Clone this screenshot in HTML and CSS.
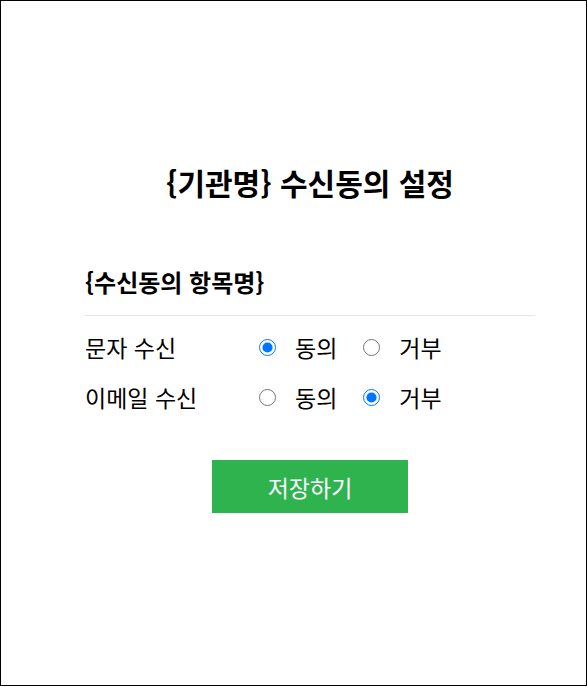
FILE: index.html
```html
<!DOCTYPE html>
<html lang="ko">
<head>
<meta charset="utf-8">
<title>수신동의 설정</title>
<link rel="stylesheet" href="styles.css">
</head>
<body>
<div class="frame">
  <main class="consent">
    <h1 class="consent-title">{기관명} 수신동의 설정</h1>
    <section class="consent-group">
      <h2 class="group-title">{수신동의 항목명}</h2>
      <div class="option-row">
        <span class="option-label">문자 수신</span>
        <label class="choice"><input type="radio" name="sms" checked><span>동의</span></label>
        <label class="choice"><input type="radio" name="sms"><span>거부</span></label>
      </div>
      <div class="option-row">
        <span class="option-label">이메일 수신</span>
        <label class="choice"><input type="radio" name="email"><span>동의</span></label>
        <label class="choice"><input type="radio" name="email" checked><span>거부</span></label>
      </div>
    </section>
    <div class="actions">
      <button type="button" class="save-btn">저장하기</button>
    </div>
  </main>
</div>
</body>
</html>
```
FILE: styles.css
```css
html, body {
  margin: 0;
  padding: 0;
  background: #fff;
}

body {
  font-family: "Noto Sans CJK KR", "Noto Sans", sans-serif;
  color: #000;
}

.frame {
  box-sizing: border-box;
  width: 587px;
  height: 686px;
  border: 1px solid #000;
  padding: 0 51px 0 84px;
}

.consent {
  width: 450px;
  display: flex;
  flex-direction: column;
}

.consent-title {
  margin: 160px 0 0;
  font-size: 30px;
  line-height: 42px;
  font-weight: 700;
  text-align: center;
}

.consent-group {
  margin-top: 64px;
}

.group-title {
  margin: 0;
  font-size: 24px;
  line-height: 30px;
  font-weight: 700;
  padding-bottom: 18px;
  border-bottom: 1px solid #e6e6e6;
}

.option-row {
  display: flex;
  align-items: center;
  height: 50px;
  font-size: 23px;
}

.option-row:first-of-type {
  margin-top: 6px;
}

.option-label {
  width: 174px;
}

.choice {
  display: flex;
  align-items: center;
  margin-right: 26px;
}

.choice input {
  width: 17px;
  height: 17px;
  margin: 0 19px 0 0;
}

.actions {
  display: flex;
  justify-content: center;
  margin-top: 38px;
}

.save-btn {
  width: 196px;
  height: 53px;
  border: 0;
  background: #2fb34f;
  color: #fff;
  font-family: inherit;
  font-size: 23px;
}
```
